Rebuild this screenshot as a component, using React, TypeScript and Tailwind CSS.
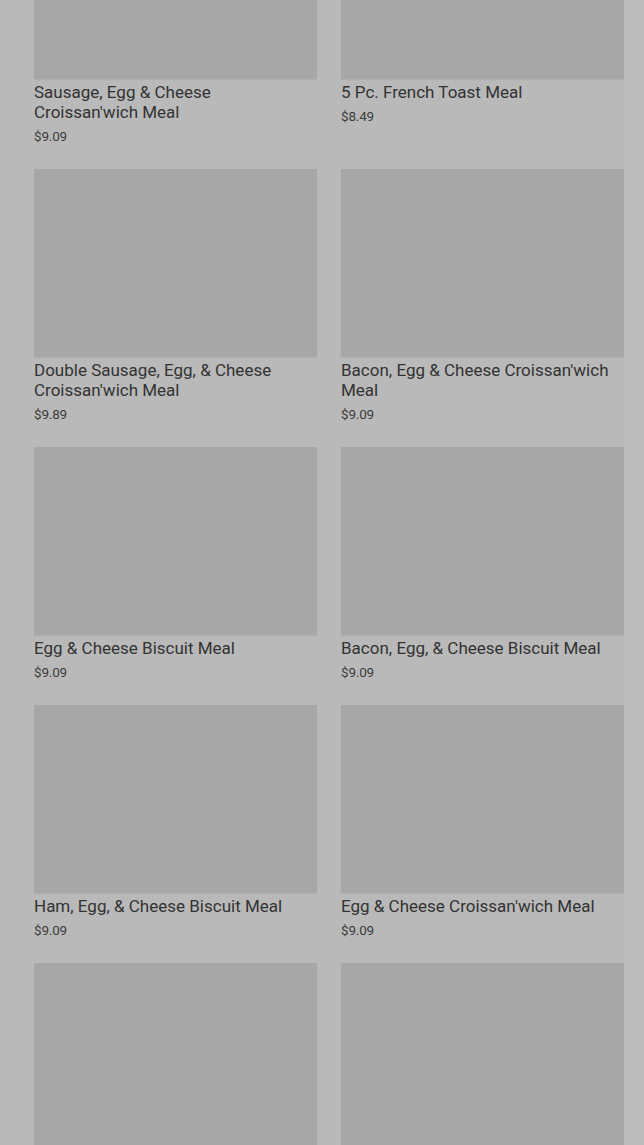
const items = [
  { name: "Sausage, Egg & Cheese Croissan'wich Meal", price: "$9.09" },
  { name: "5 Pc. French Toast Meal", price: "$8.49" },
  { name: "Double Sausage, Egg, & Cheese Croissan'wich Meal", price: "$9.89" },
  { name: "Bacon, Egg & Cheese Croissan'wich Meal", price: "$9.09" },
  { name: "Egg & Cheese Biscuit Meal", price: "$9.09" },
  { name: "Bacon, Egg, & Cheese Biscuit Meal", price: "$9.09" },
  { name: "Ham, Egg, & Cheese Biscuit Meal", price: "$9.09" },
  { name: "Egg & Cheese Croissan'wich Meal", price: "$9.09" },
  { name: "", price: "" },
  { name: "", price: "" },
]

function MenuCard({ name, price }: { name: string; price: string }) {
  return (
    <div>
      <div className="h-[188px] bg-[#a7a7a7] shadow-[0_1px_1px_rgba(0,0,0,0.05)]" />
      {name && (
        <>
          <h3 className="mt-[3px] text-[17px] leading-[20px] text-[#333333] font-normal">
            {name}
          </h3>
          <p className="mt-[6px] text-[13.5px] leading-[16px] text-[#3d3d3d] tracking-[-0.2px]">{price}</p>
        </>
      )}
    </div>
  )
}

export default function App() {
  return (
    <div
      className="h-[1145px] overflow-hidden bg-[#bcbcbc]"
      style={{ fontFamily: "Roboto, 'Liberation Sans', sans-serif" }}
    >
      <div className="w-[624px] bg-[#b9b9b9] pl-[34px]">
        <div className="-mt-[109px] grid grid-cols-2 gap-x-6 gap-y-[25px]">
          {items.map((item, i) => (
            <MenuCard key={i} name={item.name} price={item.price} />
          ))}
        </div>
      </div>
    </div>
  )
}
